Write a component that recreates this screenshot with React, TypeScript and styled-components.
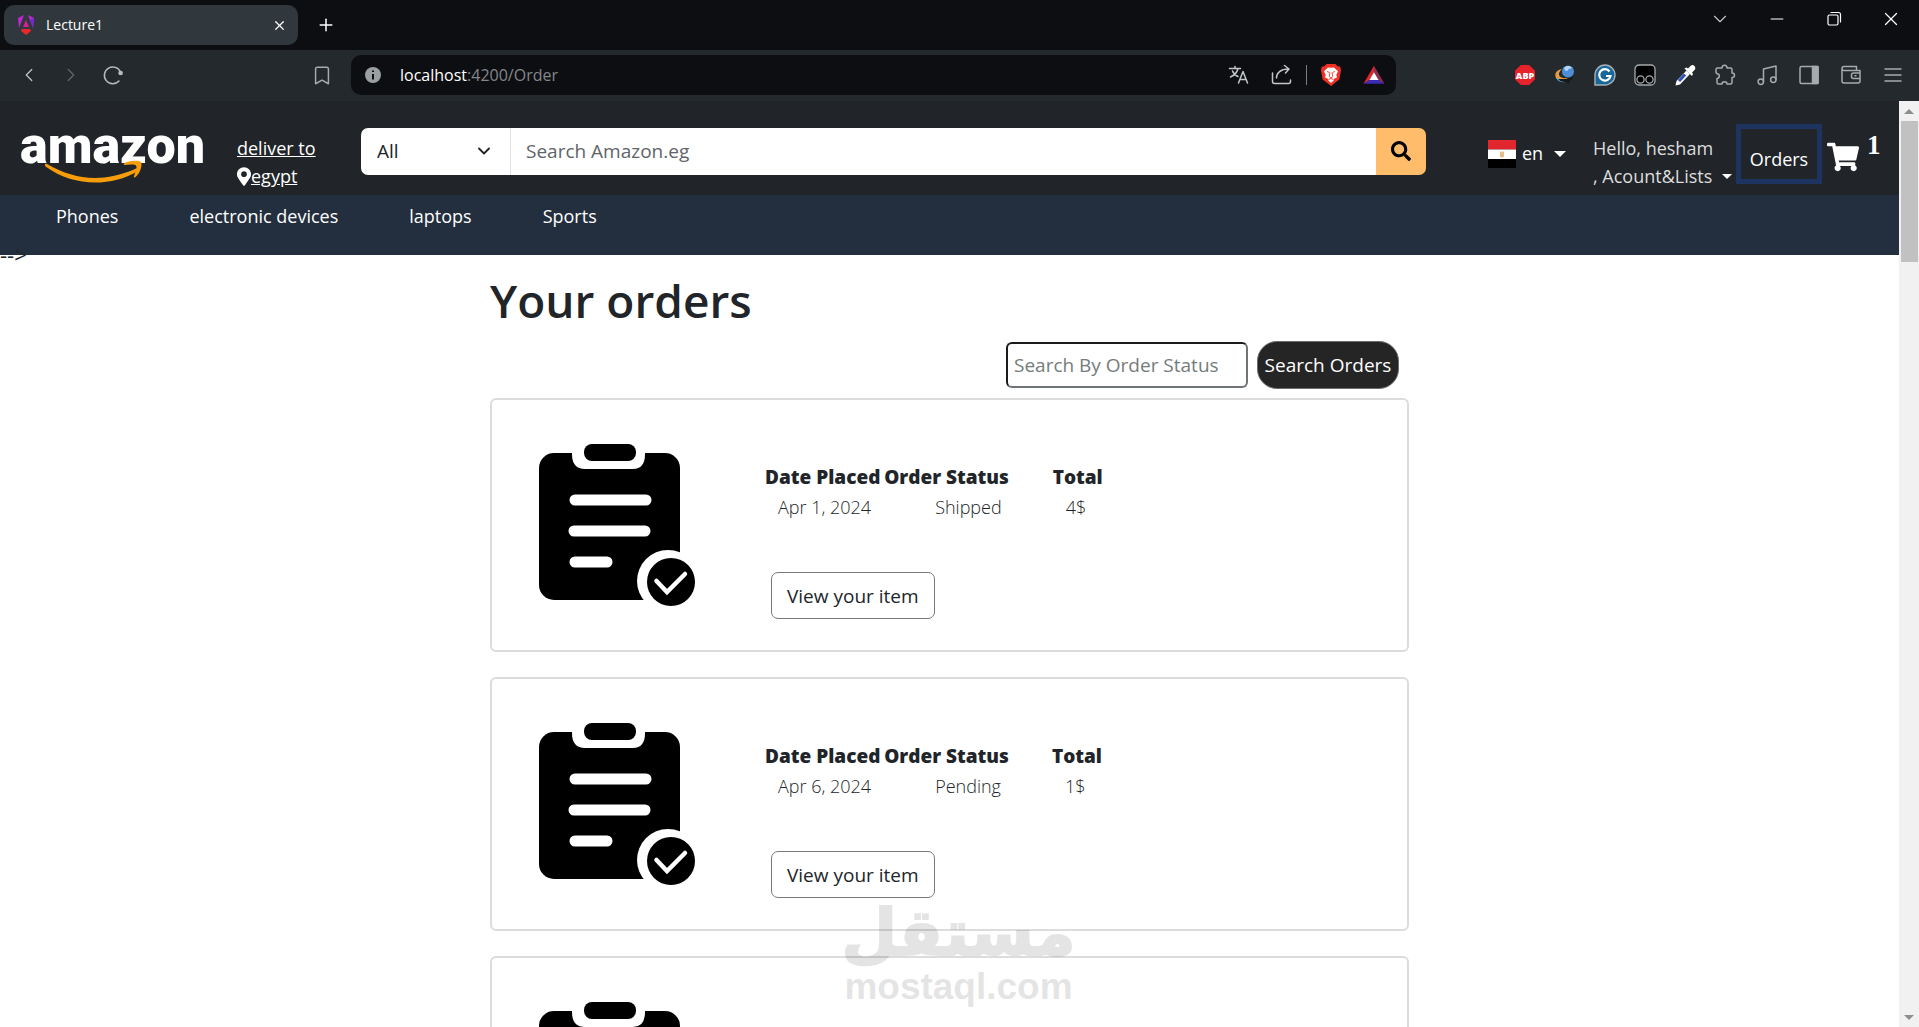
import React from "react";
import styled, { createGlobalStyle } from "styled-components";
import { Minus, X, Plus, ChevronDown, ChevronLeft, ChevronRight, Bookmark } from "lucide-react";
import { FaSearch, FaShoppingCart, FaMapMarkerAlt } from "react-icons/fa";

const GlobalStyle = createGlobalStyle`
  *, *::before, *::after { box-sizing: border-box; }
  body {
    margin: 0;
    background: #fff;
    color: #212529;
    font-family: "Open Sans", "Noto Sans", sans-serif;
    font-size: 18px;
    line-height: 28px;
    overflow: hidden;
  }
  button, input, select { font: inherit; margin: 0; }
  h1, p { margin: 0; }
`;

const Window = styled.div`
  display: flex;
  flex-direction: column;
  height: 100vh;
  overflow: hidden;
`;

/* ---------- Browser chrome ---------- */

const TabBar = styled.div`
  flex: none;
  display: flex;
  align-items: flex-start;
  height: 50px;
  padding: 5px 17px 0 4px;
  background: #0d0e12;
  color: #fff;
`;

const Tab = styled.div`
  display: flex;
  align-items: center;
  gap: 10px;
  width: 294px;
  height: 40px;
  padding: 0 8px 0 12px;
  border-radius: 10px;
  background: #30383d;
  font-size: 14px;
`;

const TabTitle = styled.span`
  flex: 1;
`;

const IconButton = styled.button<{ $tone?: string }>`
  display: inline-flex;
  flex: none;
  align-items: center;
  justify-content: center;
  width: 22px;
  height: 22px;
  padding: 0;
  border: 0;
  background: none;
  color: ${(p) => p.$tone ?? "#a5abae"};
`;

const NewTab = styled.div`
  display: flex;
  align-items: center;
  height: 40px;
  margin-left: 17px;
`;

const WindowControls = styled.div`
  display: flex;
  gap: 35px;
  margin-left: auto;
  padding-top: 3px;
`;

const Toolbar = styled.div`
  flex: none;
  display: flex;
  align-items: center;
  height: 51px;
  padding: 0 15px 1px 0;
  background: #23292c;
`;

const NavButtons = styled.div`
  display: flex;
  flex: none;
  gap: 20px;
  width: 351px;
  padding: 0 18px;

  & > :last-child { margin-left: auto; }
`;

const AddressBar = styled.div`
  display: flex;
  flex: 1;
  align-items: center;
  max-width: 1045px;
  height: 40px;
  padding: 0 11px;
  border-radius: 10px;
  background: #0d0e12;
`;

const Url = styled.p`
  flex: 1;
  padding-left: 16px;
  color: #84878a;
  font-size: 16px;

  b { color: #fff; font-weight: 400; }
`;

const IconGroup = styled.div<{ $gap: number }>`
  display: flex;
  gap: ${(p) => p.$gap}px;
`;

const Divider = styled.span`
  width: 1px;
  height: 20px;
  margin: 0 13px;
  background: #7b7f82;
`;

const Extensions = styled.div`
  display: flex;
  gap: 20px;
  margin-left: auto;
`;

/* ---------- Page frame ---------- */

const Viewport = styled.div`
  display: flex;
  flex: 1;
  min-height: 0;
`;

const Page = styled.div`
  position: relative;
  flex: 1;
  min-width: 0;
  overflow: hidden;
`;

const Scrollbar = styled.div`
  display: flex;
  flex: none;
  flex-direction: column;
  align-items: center;
  width: 20px;
  background: #f1f1f1;
`;

const ScrollArrow = styled.svg`
  flex: none;
  width: 20px;
  height: 20px;
  fill: #8a8f92;
`;

const ScrollThumb = styled.span`
  width: 17px;
  height: 141px;
  margin-bottom: auto;
  background: #c1c1c1;
`;

/* ---------- Store header ---------- */

const Header = styled.header`
  display: flex;
  align-items: center;
  height: 94px;
  padding: 12px 20px 0;
  background: #212529;
  color: #fff;
`;

const Logo = styled.a`
  position: relative;
  flex: none;
  width: 183px;
  height: 46px;
  margin-right: 34px;
  color: #fff;
  font: 900 52px/30px Roboto, sans-serif;
  text-decoration: none;

  svg {
    position: absolute;
    left: 24px;
    bottom: -7px;
  }
`;

const Deliver = styled.a`
  flex: none;
  width: 124px;
  padding-top: 16px;
  color: #fff;

  span { display: block; }
  svg { width: 14px; height: 19px; margin-bottom: -3px; }
`;

const SearchForm = styled.form`
  display: flex;
  flex: 1;
  min-width: 0;
  padding-bottom: 6px;
  margin-right: 62px;
  font-size: 19px;
`;

const Category = styled.div`
  position: relative;
  display: flex;
  flex: none;
  align-items: center;
  width: 150px;
  color: #212529;

  select {
    width: 100%;
    height: 47px;
    padding: 0 16px;
    border: 0;
    border-right: 1px solid #dee2e6;
    border-radius: 7px 0 0 7px;
    background: #fff;
    color: inherit;
    appearance: none;
  }
  svg {
    position: absolute;
    right: 17px;
    pointer-events: none;
  }
`;

const SearchBox = styled.input`
  flex: 1;
  min-width: 0;
  height: 47px;
  padding: 0 15px;
  border: 0;
  border-radius: 0;
  background: #fff;

  &::placeholder { color: #5e6469; opacity: 1; }
`;

const SearchSubmit = styled.button`
  display: flex;
  align-items: center;
  justify-content: center;
  width: 50px;
  height: 47px;
  padding: 0;
  border: 0;
  border-radius: 0 7px 7px 0;
  background: #ffbd6b;
  color: #000;
`;

const Language = styled.button`
  display: flex;
  flex: none;
  align-items: center;
  gap: 6px;
  width: 105px;
  padding: 0;
  border: 0;
  background: none;
  color: #fff;
  line-height: 24px;

  span:first-of-type { padding-bottom: 3px; }
`;

const Caret = styled.i`
  display: inline-block;
  margin-left: 5px;
  border: 6px solid transparent;
  border-top-color: #fff;
  border-bottom: 0;
  vertical-align: 4px;
`;

const Account = styled.button`
  flex: none;
  width: 143px;
  padding: 16px 0 0;
  border: 0;
  background: none;
  color: #dcdddd;
  text-align: left;
  white-space: nowrap;

  span { display: block; }
  ${Caret} { border-width: 5px; border-bottom: 0; }
`;

const OrdersLink = styled.a`
  flex: none;
  width: 86px;
  height: 60px;
  padding-top: 16px;
  border: 5px solid #1c345f;
  color: #fff;
  text-align: center;
  text-decoration: none;
`;

const Cart = styled.a`
  display: flex;
  flex: none;
  align-items: flex-start;
  gap: 8px;
  margin-left: 5px;
  padding-bottom: 4px;
  color: #fff;
  text-decoration: none;

  svg { margin-top: 10px; }
  span { width: 12px; font: 700 27px/28px "Liberation Serif", serif; }
`;

const CategoryNav = styled.nav`
  display: flex;
  gap: 71px;
  height: 60px;
  padding: 7px 56px 0;
  background: #232f3e;

  a { color: #fff; text-decoration: none; }
`;

const StrayText = styled.p`
  height: 28px;
  margin-top: -13px;
  font-size: 22px;
  line-height: 24px;
`;

/* ---------- Orders ---------- */

const Main = styled.main`
  max-width: 919px;
  margin: 0 auto;
`;

const Title = styled.h1`
  margin-bottom: 11px;
  font-size: 46px;
  font-weight: 600;
  line-height: 60px;
`;

const StatusForm = styled.form`
  display: flex;
  align-items: center;
  justify-content: flex-end;
  gap: 9px;
  margin-bottom: 9px;
  padding-right: 10px;
  font-size: 19px;
`;

const StatusInput = styled.input`
  width: 242px;
  height: 46px;
  padding: 0 6px;
  border: 2px solid;
  border-color: #1a1b1c #6f7476 #6f7476 #1a1b1c;
  border-radius: 6px;
  background: #fff;

  &::placeholder { color: #757c7a; opacity: 1; }
`;

const StatusButton = styled.button`
  width: 142px;
  height: 48px;
  padding: 0;
  border: 1px solid #6c6c6c;
  border-radius: 20px;
  background: #252525;
  color: #fff;
`;

const Card = styled.article`
  display: flex;
  align-items: flex-start;
  gap: 70px;
  margin-bottom: 25px;
  padding: 44px 47px 31px;
  border: 2px solid #dcdcdc;
  border-radius: 6px;
  background: #fff;
`;

const Details = styled.div`
  padding-top: 18px;
`;

const Summary = styled.table`
  border-collapse: collapse;
  line-height: 30px;
  text-align: left;
  white-space: nowrap;

  th { padding: 0; font-size: 19px; font-weight: 800; }
  td { padding: 0 13px; font-weight: 300; }
  td:nth-child(2) { padding: 0 51px; }
`;

const ViewButton = styled.button`
  height: 47px;
  margin: 50px 0 0 6px;
  padding: 0 15px;
  border: 1px solid #75797c;
  border-radius: 7px;
  background: #fff;
  color: #212529;
  font-size: 19px;
`;

const Watermark = styled.div`
  position: absolute;
  left: 50%;
  bottom: 20px;
  display: flex;
  flex-direction: column;
  align-items: center;
  width: 230px;
  margin-left: -106px;
  color: #000;
  opacity: 0.1;
  pointer-events: none;
  white-space: nowrap;

  span {
    font: 700 64px/68px "DejaVu Sans", sans-serif;
    -webkit-text-stroke: 2px #000;
  }
  b { font: 700 37px/40px "Liberation Sans", sans-serif; }
`;

/* ---------- Drawings ---------- */

const AngularMark = () => (
  <svg width="20" height="22" viewBox="0 0 20 22">
    <path d="M2 4 8 1 3 14zM18 4 12 1l5 13z" fill="#c026d3" />
    <path d="m18 4-1 10-3-8z" fill="#6d28d9" />
    <path d="m10 6 3 7H7z" fill="#d4218f" />
    <path d="m5 17 1-2h8l1 2-5 4z" fill="#e8282e" />
  </svg>
);

const line = { fill: "none", stroke: "currentColor", strokeWidth: 1.5, strokeLinecap: "round", strokeLinejoin: "round" } as const;

const RestoreIcon = () => (
  <svg width="16" height="16" viewBox="0 0 16 16" {...line} strokeWidth={1.2}>
    <rect x="2" y="4" width="10" height="10" rx="1.5" />
    <path d="M5 1.5h7.5a2 2 0 0 1 2 2V11" />
  </svg>
);

const ReloadIcon = () => (
  <svg width="22" height="22" viewBox="0 0 22 22" {...line}>
    <path d="M18.6 8.2A8.4 8.4 0 1 0 17 17" />
    <circle cx="18.6" cy="9" r="1.6" fill="currentColor" />
  </svg>
);

const InfoIcon = () => (
  <svg width="22" height="22" viewBox="0 0 22 22">
    <circle cx="11" cy="11" r="8" fill="#9a9fa2" />
    <path d="M11 6.5v1.4M11 10v5.5" stroke="#0d0e12" strokeWidth="2" />
  </svg>
);

const TranslateIcon = () => (
  <svg width="22" height="22" viewBox="0 0 22 22" {...line}>
    <path d="M1.500 4.500h11M7 2.500v2M10 4.500C9 8.500 6 11.500 2.500 13M4.500 7c1 2.500 3 4.500 5.500 5.500M10.500 19l4.500-11.500L19.500 19M12 15.500h6" />
  </svg>
);

const ShareIcon = () => (
  <svg width="22" height="22" viewBox="0 0 22 22" {...line}>
    <path d="M1.500 9v8.500a2 2 0 0 0 2 2h14a2 2 0 0 0 2-2V16M5.500 14c0-5 4-9 12-9M13.500 1.500 18 5l-3.500 4" />
  </svg>
);

const BraveIcon = () => (
  <svg width="22" height="24" viewBox="0 0 22 24">
    <path d="M6.500 1h9l2 2.300 2.800.5.700 3.700-1.700 9L11 23l-8.300-6.500L1 7.500l.7-3.700 2.800-.5z" fill="#ee3124" />
    <path d="m11 4.800 3-.3 4 3.700-1.800 4 1 2-3 1.500-.6 1.800L11 20l-2.600-2.500-.6-1.800-3-1.500 1-2L4 8.200l4-3.700z" fill="#fff" />
    <path d="m7 8.500 2.500 1M15 8.500l-2.500 1M10 9.500l-.8 4L11 15l1.800-1.500-.8-4M8.500 16.500l2.500-1 2.500 1" fill="none" stroke="#ee3124" strokeWidth="0.900" />
  </svg>
);

const RewardsIcon = () => (
  <svg width="24" height="22" viewBox="0 0 24 22">
    <path d="M12 1 0.500 20.500 7 17l5-9z" fill="#e0262b" />
    <path d="m12 1 11.500 19.500L17 17l-5-9z" fill="#8e2c4c" />
    <path d="M.5 20.500 7 16.500h10l6.500 4z" fill="#3b2bb5" />
    <path d="m12 8 5 8.500H7z" fill="#fff" />
  </svg>
);

const AbpIcon = () => (
  <svg width="22" height="22" viewBox="0 0 22 22">
    <path d="M6.800 1h8.400L21 6.800v8.400L15.200 21H6.800L1 15.200V6.800z" fill="#e8222a" />
    <text x="11" y="14.500" textAnchor="middle" fontSize="9" fontWeight="800" fill="#fff">ABP</text>
  </svg>
);

const GlobeIcon = () => (
  <svg width="22" height="22" viewBox="0 0 22 22">
    <circle cx="14" cy="7.500" r="6" fill="#4d8fd6" />
    <path d="M10 4c3-3 7-2 8 0-2 1-3 0-4 2s-3 1-4-2z" fill="#b9d6ef" />
    <path d="M8 5C2 6 0 10 2 14c2 3.500 8 3 12 0-4 .5-8 0-9-3C4.500 9 6 7 8 5z" fill="#e79a3c" />
    <path d="M2 15c3 4 9 4 11 3l1 2.500 2-3.500 4-4-8 2z" fill="#17191b" />
    <path d="M2 14c2 4 6 5 10 4-4 0-7-1-8-4z" fill="#5ea0da" />
  </svg>
);

const GrammarlyIcon = () => (
  <svg width="22" height="22" viewBox="0 0 22 22">
    <path d="M1 21V11a10 10 0 1 1 10 10z" fill="#17679b" stroke="#a7b0b5" strokeWidth="1.400" />
    <path d="M15.500 7.500A5.700 5.700 0 1 0 16.500 12H12" fill="none" stroke="#fff" strokeWidth="2.200" />
  </svg>
);

const TamperIcon = () => (
  <svg width="22" height="22" viewBox="0 0 22 22" fill="#000" stroke="#a3a9ac" strokeWidth="1.300">
    <rect x="1" y="1" width="20" height="20" rx="4" />
    <circle cx="6.500" cy="15.500" r="3.600" />
    <circle cx="15.500" cy="15.500" r="3.600" />
  </svg>
);

const DropperIcon = () => (
  <svg width="22" height="22" viewBox="0 0 22 22">
    <path d="m12.500 6.500-10 10.500-1 4.500L6 20.500 16 10z" fill="#fff" />
    <path d="m11 10.500-6 6.500" stroke="#2b50b8" strokeWidth="3" />
    <path d="m10.500 4.500 2-1 1.500 1L17 1.500q2-1 3.500.5t.5 3.500L18 8.500l1 1.500-1 2z" fill="#fff" />
  </svg>
);

const PuzzleIcon = () => (
  <svg width="22" height="22" viewBox="0 0 22 22" {...line}>
    <path d="M3.500 4H8c0-1.600 1-2.800 2.500-2.800S13 2.400 13 4h3.500A1.500 1.500 0 0 1 18 5.500V9c1.500 0 2.500 1 2.500 2.300S19.500 13.600 18 13.600v5A1.500 1.500 0 0 1 16.500 20H13c0-1.500-1-2.300-2.500-2.300S8 18.500 8 20H4.500A1.500 1.500 0 0 1 3 18.500v-4c1.500 0 2.300-1 2.300-2.400S4.500 9.800 3 9.800L2 8.500V5.500A1.500 1.500 0 0 1 3.500 4z" />
  </svg>
);

const MusicIcon = () => (
  <svg width="22" height="22" viewBox="0 0 22 22" {...line}>
    <path d="M7.500 17.500V5L20 2v13.500" />
    <circle cx="4.800" cy="17.700" r="2.700" />
    <circle cx="17.300" cy="15.700" r="2.700" />
  </svg>
);

const PanelIcon = () => (
  <svg width="22" height="22" viewBox="0 0 22 22" {...line}>
    <rect x="2" y="2.500" width="18" height="17" rx="1.500" />
    <path d="M14.500 2.500H20v17h-5.500z" fill="currentColor" />
  </svg>
);

const WalletIcon = () => (
  <svg width="22" height="22" viewBox="0 0 22 22" {...line}>
    <path d="M20 9V6.500H4a2 2 0 0 1 0-4h12.500v4M2 4.500v12.500a2 2 0 0 0 2 2h14a2 2 0 0 0 2-2v-2.500M20 9h-6.500a2 2 0 0 0-2 2v1.500a2 2 0 0 0 2 2H20zM15 11.800h1" />
  </svg>
);

const MenuIcon = () => (
  <svg width="22" height="22" viewBox="0 0 22 22" {...line}>
    <path d="M3 5h16M3 11h16M3 17h16" />
  </svg>
);

const Smile = () => (
  <svg width="106" height="24" viewBox="0 0 106 24" fill="#f79d0c">
    <path d="M3 4c28 16 55 19 88 5 3-1.200 5 .5 2.500 2.500C66 27 30 27 1.500 6.500.5 5 1 3.200 3 4z" />
    <path d="M80 3.500C84 .5 94-.3 97 2c1.500 2.500-.5 11-5.500 15-1.500 1-2 .3-1.500-1 1.500-3.500 3.500-9 2-10.500s-7-.8-10.500-.5c-1.500 0-2.500-.5-1.500-1.500z" />
  </svg>
);

const EgyptFlag = () => (
  <svg width="28" height="28" viewBox="0 0 28 28">
    <path d="M0 0h28v9.500H0z" fill="#e2262d" />
    <path d="M0 9.500h28V19H0z" fill="#fff" />
    <path d="M0 19h28v9H0z" fill="#000" />
    <path d="M12 11.500h1.500l.5 1 .5-1H16V17h-1l-1 1-1-1h-1z" fill="#e5bf86" />
  </svg>
);

const OrderIcon = () => (
  <svg width="156" height="162" viewBox="0 0 156 162">
    <rect x="0" y="9" width="141" height="147" rx="15" />
    <path d="M33 0v10q0 15 13 15h48q12 0 12-15V0z" fill="#fff" />
    <rect x="45" y="0" width="52" height="17" rx="8" />
    <g stroke="#fff" strokeWidth="11" strokeLinecap="round">
      <path d="M36 56h71M35 87h71M36 118h32" />
    </g>
    <circle cx="129" cy="137" r="31" fill="#fff" />
    <circle cx="132" cy="138" r="24" />
    <path d="m117.500 137 10.500 11 18-18" fill="none" stroke="#fff" strokeWidth="4.500" strokeLinecap="round" />
  </svg>
);

/* ---------- Data ---------- */

const orders = [
  { id: 1, date: "Apr 1, 2024", status: "Shipped", total: "4$" },
  { id: 2, date: "Apr 6, 2024", status: "Pending", total: "1$" },
  { id: 3, date: "Apr 6, 2024", status: "Pending", total: "1$" },
];

const extensions = [
  { name: "Adblock Plus", icon: <AbpIcon /> },
  { name: "Web browser helper", icon: <GlobeIcon /> },
  { name: "Grammarly", icon: <GrammarlyIcon /> },
  { name: "Tampermonkey", icon: <TamperIcon /> },
  { name: "Color picker", icon: <DropperIcon /> },
  { name: "Extensions", icon: <PuzzleIcon /> },
];

const browserTools = [
  { name: "Playlist", icon: <MusicIcon /> },
  { name: "Sidebar", icon: <PanelIcon /> },
  { name: "Wallet", icon: <WalletIcon /> },
  { name: "Menu", icon: <MenuIcon /> },
];

const categories = ["Phones", "electronic devices", "laptops", "Sports"];

export default function App() {
  return (
    <Window>
      <GlobalStyle />
      <TabBar>
        <Tab>
          <AngularMark />
          <TabTitle>Lecture1</TabTitle>
          <IconButton $tone="#fff" aria-label="Close tab"><X size={15} /></IconButton>
        </Tab>
        <NewTab>
          <IconButton $tone="#fff" aria-label="New tab"><Plus size={20} strokeWidth={1.800} /></IconButton>
        </NewTab>
        <WindowControls>
          <IconButton $tone="#c8cacb" aria-label="Search tabs"><ChevronDown size={22} strokeWidth={1.200} /></IconButton>
          <IconButton $tone="#fff" aria-label="Minimize"><Minus size={20} strokeWidth={1.400} /></IconButton>
          <IconButton $tone="#fff" aria-label="Restore"><RestoreIcon /></IconButton>
          <IconButton $tone="#fff" aria-label="Close window"><X size={24} strokeWidth={1.300} /></IconButton>
        </WindowControls>
      </TabBar>

      <Toolbar>
        <NavButtons>
          <IconButton $tone="#c3c7c9" aria-label="Back"><ChevronLeft size={30} strokeWidth={1.300} /></IconButton>
          <IconButton $tone="#62686b" aria-label="Forward"><ChevronRight size={30} strokeWidth={1.300} /></IconButton>
          <IconButton $tone="#b5babc" aria-label="Reload"><ReloadIcon /></IconButton>
          <IconButton aria-label="Bookmark"><Bookmark size={23} strokeWidth={1.600} /></IconButton>
        </NavButtons>
        <AddressBar>
          <InfoIcon />
          <Url><b>localhost</b>:4200/Order</Url>
          <IconGroup $gap={21}>
            <IconButton $tone="#c3c7c9" aria-label="Translate"><TranslateIcon /></IconButton>
            <IconButton $tone="#c3c7c9" aria-label="Share"><ShareIcon /></IconButton>
          </IconGroup>
          <Divider />
          <IconGroup $gap={21}>
            <IconButton aria-label="Brave Shields"><BraveIcon /></IconButton>
            <IconButton aria-label="Brave Rewards"><RewardsIcon /></IconButton>
          </IconGroup>
        </AddressBar>
        <Extensions>
          <IconGroup $gap={18}>
            {extensions.map((e) => <IconButton key={e.name} aria-label={e.name}>{e.icon}</IconButton>)}
          </IconGroup>
          <IconGroup $gap={20}>
            {browserTools.map((e) => <IconButton key={e.name} aria-label={e.name}>{e.icon}</IconButton>)}
          </IconGroup>
        </Extensions>
      </Toolbar>

      <Viewport>
        <Page>
          <Header>
            <Logo href="#home">amazon<Smile /></Logo>
            <Deliver href="#address">
              <span>deliver to</span>
              <FaMapMarkerAlt />egypt
            </Deliver>
            <SearchForm onSubmit={(e) => e.preventDefault()}>
              <Category>
                <select aria-label="Category" defaultValue="All"><option>All</option></select>
                <ChevronDown size={20} strokeWidth={2.200} />
              </Category>
              <SearchBox aria-label="Search Amazon.eg" placeholder="Search Amazon.eg" />
              <SearchSubmit aria-label="Search"><FaSearch size={20} /></SearchSubmit>
            </SearchForm>
            <Language><EgyptFlag /><span>en</span><Caret /></Language>
            <Account>
              <span>Hello, hesham</span>
              , Acount&amp;Lists <Caret />
            </Account>
            <OrdersLink href="#orders">Orders</OrdersLink>
            <Cart href="#cart" aria-label="Cart, 1 item"><FaShoppingCart size={32} /><span>1</span></Cart>
          </Header>
          <CategoryNav>
            {categories.map((c) => <a key={c} href="#category">{c}</a>)}
          </CategoryNav>
          <StrayText>--&gt;</StrayText>

          <Main>
            <Title>Your orders</Title>
            <StatusForm onSubmit={(e) => e.preventDefault()}>
              <StatusInput aria-label="Search By Order Status" placeholder="Search By Order Status" />
              <StatusButton>Search Orders</StatusButton>
            </StatusForm>
            {orders.map((o) => (
              <Card key={o.id}>
                <OrderIcon />
                <Details>
                  <Summary>
                    <thead><tr><th>Date Placed</th><th>Order Status</th><th>Total</th></tr></thead>
                    <tbody><tr><td>{o.date}</td><td>{o.status}</td><td>{o.total}</td></tr></tbody>
                  </Summary>
                  <ViewButton>View your item</ViewButton>
                </Details>
              </Card>
            ))}
          </Main>
          <Watermark><span lang="ar">مستقل</span><b>mostaql.com</b></Watermark>
        </Page>
        <Scrollbar>
          <ScrollArrow viewBox="0 0 20 20"><path d="m10 8 5 5H5z" /></ScrollArrow>
          <ScrollThumb />
          <ScrollArrow viewBox="0 0 20 20"><path d="m10 13 5-5H5z" /></ScrollArrow>
        </Scrollbar>
      </Viewport>
    </Window>
  );
}
